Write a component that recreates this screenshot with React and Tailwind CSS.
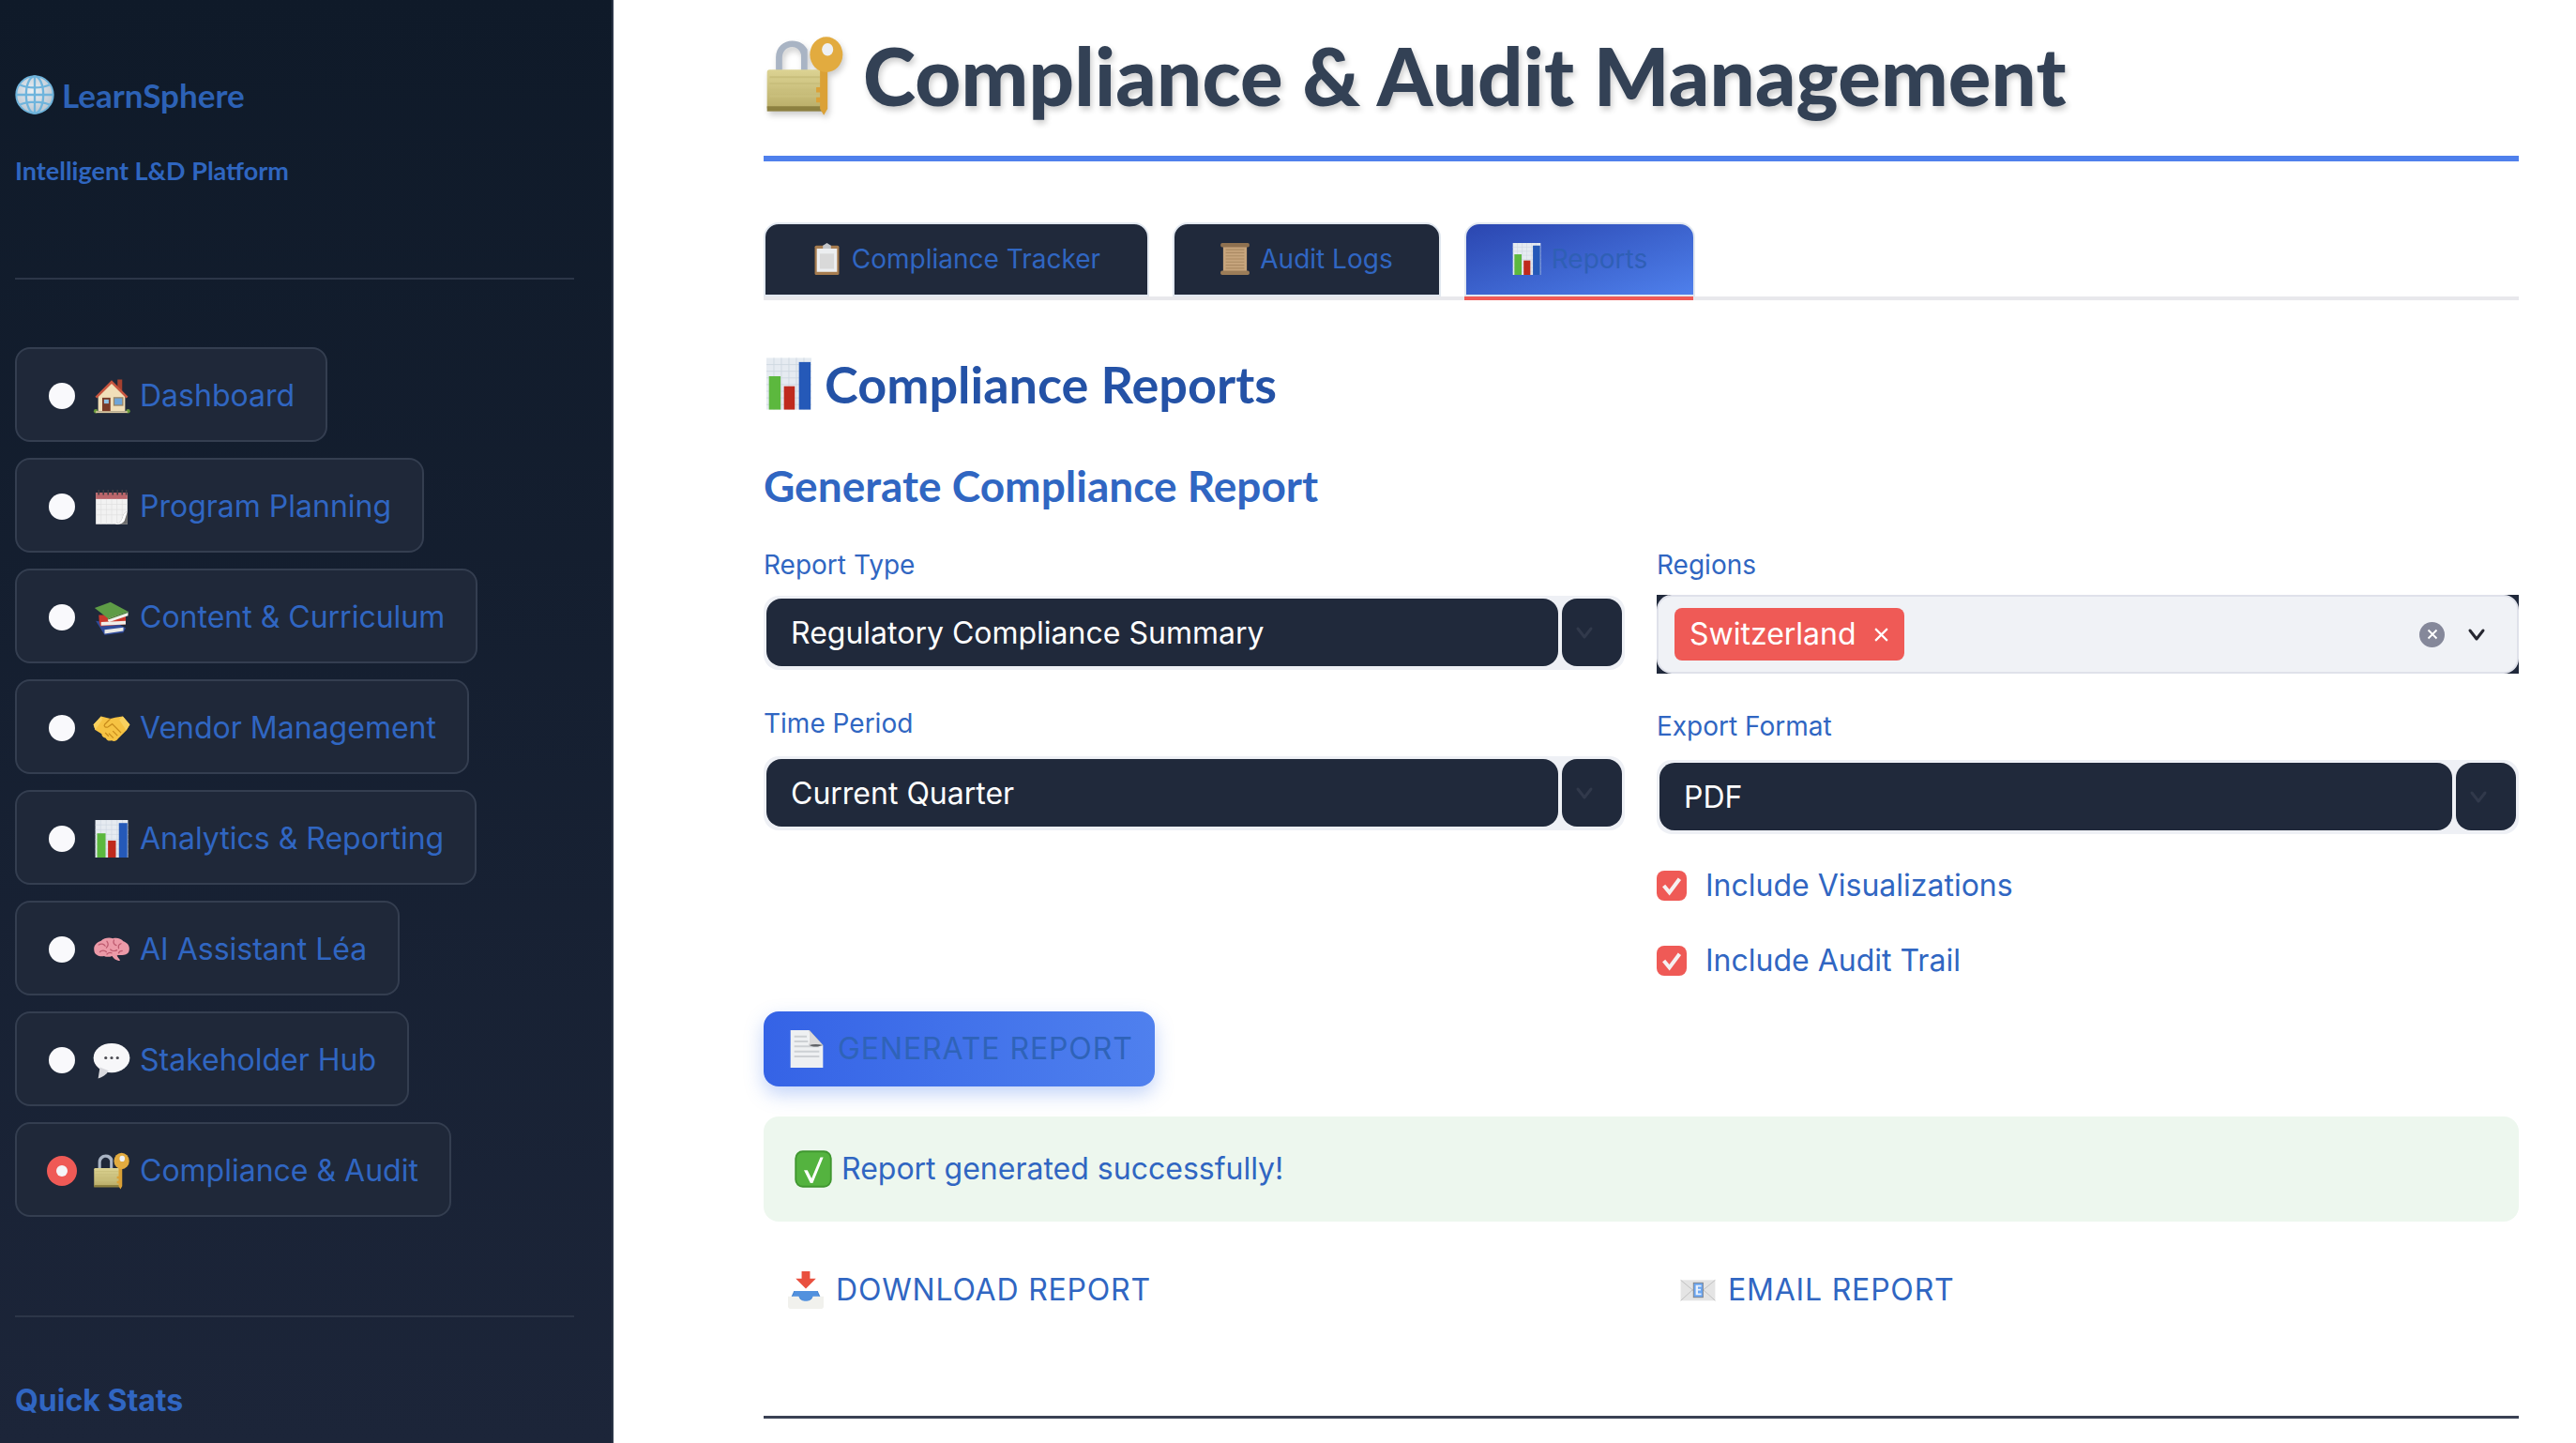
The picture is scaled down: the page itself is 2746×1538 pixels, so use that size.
import React from "react";

const GlobeIcon = ({ className }) => (
  <svg viewBox="0 0 64 64" className={className}>
    <defs>
      <radialGradient id="globeFill" cx="45%" cy="40%" r="60%">
        <stop offset="0%" stopColor="#eef1f4" />
        <stop offset="100%" stopColor="#b9c6d2" />
      </radialGradient>
    </defs>
    <circle cx="32" cy="32" r="30" fill="url(#globeFill)" stroke="#6fb4dc" strokeWidth="3" />
    <g fill="none" stroke="#6fb4dc" strokeWidth="3.5">
      <ellipse cx="32" cy="32" rx="14" ry="30" />
      <path d="M32 2v60M3 32h58M8 16c14 6 34 6 48 0M8 48c14-6 34-6 48 0" />
    </g>
  </svg>
);

const HouseIcon = ({ className }) => (
  <svg viewBox="0 0 64 64" className={className}>
    <path d="M42 4h8v22l-8-7z" fill="#a5402f" />
    <path d="M9 58V30L32 8l23 22v28z" fill="#f1dfb9" />
    <path d="M4 33 32 5l28 28-3 3L32 11 7 36z" fill="#c8553f" />
    <rect x="16" y="35" width="14" height="25" fill="#7a3b27" />
    <rect x="19" y="38" width="8" height="7" fill="#8fc1e4" />
    <rect x="36" y="35" width="15" height="13" fill="#6fa5d8" stroke="#9a8462" strokeWidth="2" />
    <circle cx="5" cy="58" r="3.5" fill="#6a9a3a" />
    <circle cx="60" cy="58" r="3.5" fill="#6a9a3a" />
    <rect x="5" y="58" width="54" height="3" fill="#d9c9a3" />
  </svg>
);

const CalendarIcon = ({ className }) => (
  <svg viewBox="0 0 64 64" className={className}>
    <rect x="5" y="8" width="54" height="54" fill="#f2f2f2" />
    <rect x="5" y="8" width="54" height="11" fill="#b9656a" />
    <path d="M14 19v43M23 19v43M32 19v43M41 19v43M50 19v43M5 28h54M5 37h54M5 46h54" stroke="#dedede" strokeWidth="1" />
    <path d="M59 40v22H36c10-2 13-6 15-13 1-5 4-8 8-9z" fill="#6b6b6b" />
    <path d="M59 40c-4 1-7 4-8 9-2 7-5 11-15 13 8 1 15-1 18-6z" fill="#fff" />
    <path d="M10 3v9M18 3v9M26 3v9M34 3v9M42 3v9M50 3v9M57 3v9" stroke="#3c3c44" strokeWidth="2.5" />
  </svg>
);

const BooksIcon = ({ className }) => (
  <svg viewBox="0 0 64 64" className={className}>
    <path d="M5 38 44 44l12 6-4 8-32 4z" fill="#2f4a9a" />
    <path d="M20 53l32-4v6l-32 5z" fill="#e9e9e6" />
    <path d="M10 28h46v16l-43 3-2-6z" fill="#c9382c" />
    <path d="M14 40l42-2v6l-42 2z" fill="#efeeea" />
    <path d="M3 16 30 6l30 16-34 12z" fill="#5e9c46" />
    <path d="M26 34l34-12v7l-32 11c-3-1-3-4-2-6z" fill="#f1f1ec" />
    <path d="M26 34l34-12v2L26 36z" fill="#3f7c31" />
  </svg>
);

const HandshakeIcon = ({ className }) => (
  <svg viewBox="0 9 64 48" className={className}>
    <path d="M1 27 14 13l16 4 8-2 13-2 12 14-6 10-14 14c-3 5-8 5-11 3-5 2-9-1-10-4-5-1-7-4-7-7L4 36z" fill="#f6c343" />
    <path d="M30 17 20 27c-2 3 2 6 6 4l7-5 15 15M27 47l-6-6M35 50l-8-8M42 46l-8-8" fill="none" stroke="#c98d1d" strokeWidth="2" />
    <path d="M14 13 1 27l3 9 12-17zM51 13l12 14-6 10-12-18z" fill="#f9d15f" />
  </svg>
);

const ChartIcon = ({ className }) => (
  <svg viewBox="5 1 54 62" className={className}>
    <rect x="5" y="1" width="54" height="62" fill="#e6ebf1" />
    <path d="M5 9h54M5 17h54M5 25h54M5 33h54M5 41h54M5 49h54M5 57h54M14 1v62M23 1v62M32 1v62M41 1v62M50 1v62" stroke="#cfd7e1" strokeWidth="1" />
    <rect x="8" y="23" width="14" height="40" fill="#5cb83e" />
    <rect x="26" y="35" width="13" height="28" fill="#bf2a1d" />
    <rect x="44" y="6" width="14" height="57" fill="#2559b8" />
  </svg>
);

const BrainIcon = ({ className }) => (
  <svg viewBox="0 0 64 44" className={className}>
    <path d="M2 22C1 13 9 9 14 7c5-5 14-6 20-4 7-2 14 0 18 5 6 2 11 7 10 14 0 6-5 9-9 9-4 1-9 0-12 1 1 4 6 7 5 9-6 0-11-4-13-8-5 2-10 2-14 0-3 1-8 1-11-1-4-2-6-5-6-10z" fill="#ec9aa8" />
    <path d="M10 14c4-3 9-1 11 2M24 8c3 4 2 8-1 11M36 6c-2 4 0 8 4 9M48 12c-3 1-5 4-4 8M12 26c3-3 8-3 11 0M30 22c3 3 8 3 11 1M50 24c-3 0-5 1-6 4M24 30c2-2 5-3 8-2" fill="none" stroke="#bd5a6f" strokeWidth="2" strokeLinecap="round" />
  </svg>
);

const BubbleIcon = ({ className }) => (
  <svg viewBox="0 0 64 64" className={className}>
    <ellipse cx="32" cy="28" rx="31" ry="25" fill="#f7f7f9" />
    <path d="M12 44 9 63c7-2 14-6 18-13z" fill="#d9d9de" />
    <g fill="#4a4a52">
      <circle cx="22" cy="28" r="2.5" />
      <circle cx="32" cy="28" r="2.5" />
      <circle cx="42" cy="28" r="2.5" />
    </g>
  </svg>
);

const LockKeyIcon = ({ className }) => (
  <svg viewBox="0 0 64 64" className={className}>
    <defs>
      <linearGradient id="lockBody" x1="0" y1="0" x2="0" y2="1">
        <stop offset="0%" stopColor="#dcd393" />
        <stop offset="100%" stopColor="#b9ad68" />
      </linearGradient>
    </defs>
    <path d="M9 30V17C9 9 15 4 22 4c6 0 10 3 12 7v19h-5V15c-1-4-4-6-7-6-5 0-8 4-8 9v12z" fill="#a9b4c4" />
    <rect x="2" y="27" width="44" height="32" rx="2" fill="url(#lockBody)" />
    <rect x="2" y="56" width="44" height="4" fill="#8c8040" />
    <path d="M4 33h40M4 38h40M4 43h40M4 48h40" stroke="#c9bf7c" strokeWidth="1.5" />
    <path d="M44 25h6v33l-3 5-3-5v-5h-3v-4h3v-4h-3v-4h3z" fill="#dba136" />
    <ellipse cx="49" cy="15" rx="13" ry="14" fill="#e2ab3f" />
    <ellipse cx="50" cy="11" rx="4.5" ry="5" fill="#eef0f2" />
  </svg>
);

const ClipboardIcon = ({ className }) => (
  <svg viewBox="8 1 48 63" className={className}>
    <rect x="8" y="6" width="48" height="58" rx="3" fill="#a67c4f" />
    <rect x="12" y="12" width="40" height="46" fill="#eceef0" />
    <rect x="18" y="22" width="28" height="30" fill="#d9d9d9" />
    <path d="M24 12V6l8-5 8 5v6z" fill="#c3c6ca" />
  </svg>
);

const ScrollIcon = ({ className }) => (
  <svg viewBox="4 1 56 62" className={className}>
    <rect x="9" y="6" width="46" height="52" fill="#c6a47c" />
    <path d="M14 14h36M14 20h36M14 26h36M14 32h36M14 38h36M14 44h36M14 50h36" stroke="#ab8a63" strokeWidth="2" />
    <rect x="4" y="1" width="56" height="8" rx="3" fill="#8f7150" />
    <rect x="4" y="55" width="56" height="8" rx="3" fill="#9b7c58" />
  </svg>
);

const PageIcon = ({ className }) => (
  <svg viewBox="6 2 52 60" className={className}>
    <path d="M6 2h30l22 24v36H6z" fill="#eef0f2" />
    <path d="M12 12h20M12 20h22M12 28h40M12 36h40M12 44h40" stroke="#cdd0d4" strokeWidth="3" />
    <path d="M36 2c1 12 0 20 0 24 8 4 16 2 22 0z" fill="#5f6266" />
    <path d="M36 2c-2 10-2 18 0 24 6-2 14-2 22 0z" fill="#f8f8f8" opacity="0.8" />
  </svg>
);

const CheckBoxEmoji = ({ className }) => (
  <svg viewBox="0 0 64 64" className={className}>
    <rect x="2" y="2" width="60" height="60" rx="12" fill="#54b33f" stroke="#3f962f" strokeWidth="3" />
    <path d="M16 34h6l7 14L44 12h5L31 56h-4z" fill="#fff" />
  </svg>
);

const InboxIcon = ({ className }) => (
  <svg viewBox="2 1 60 63" className={className}>
    <path d="M12 34h40l10 22H2z" fill="#3f7ecb" />
    <path d="M13 34h38l4 12H41c-2 5-6 7-9 7s-7-2-9-7H9z" fill="#5291de" />
    <path d="M2 43h18c2 6 7 8 12 8s10-2 12-8h18v17c0 2-2 4-4 4H6c-2 0-4-2-4-4z" fill="#f1f1ed" />
    <path d="M25 1h14v12h10L32 30 15 13h10z" fill="#e9503f" />
  </svg>
);

const MailIcon = ({ className }) => (
  <svg viewBox="0 0 64 40" className={className}>
    <rect x="1" y="2" width="62" height="37" fill="#e4e4e4" />
    <path d="M1 2l24 20M63 2 39 22M1 39l22-20M63 39 41 19" stroke="#bdbdbd" strokeWidth="1.5" />
    <rect x="24" y="7" width="17" height="26" fill="#6aa6f2" stroke="#7b7f86" strokeWidth="1.5" />
    <path d="M28 11h10v3h-6v4h5v3h-5v5h6v3H28z" fill="#e8f0fb" />
  </svg>
);

const Chevron = ({ className }) => (
  <svg viewBox="0 0 20 20" fill="none" className={className}>
    <path d="M3 6l7 9 7-9" stroke="currentColor" strokeWidth="3" strokeLinecap="round" strokeLinejoin="round" />
  </svg>
);

const navItems = [
  { label: "Dashboard", Icon: HouseIcon },
  { label: "Program Planning", Icon: CalendarIcon },
  { label: "Content & Curriculum", Icon: BooksIcon },
  { label: "Vendor Management", Icon: HandshakeIcon },
  { label: "Analytics & Reporting", Icon: ChartIcon },
  { label: "AI Assistant Léa", Icon: BrainIcon },
  { label: "Stakeholder Hub", Icon: BubbleIcon },
  { label: "Compliance & Audit", Icon: LockKeyIcon, active: true },
];

const tabs = [
  { label: "Compliance Tracker", Icon: ClipboardIcon, cls: "w-[411px]" },
  { label: "Audit Logs", Icon: ScrollIcon, cls: "w-[286px]" },
  { label: "Reports", Icon: ChartIcon, cls: "w-[246px]", active: true },
];

const heading = "font-['Lato',sans-serif]";

const Label = ({ children }) => (
  <div className="h-10 text-[28px] leading-10 text-[#3066c2]">{children}</div>
);

const Select = ({ value }) => (
  <div className="flex h-[79px] gap-1 rounded-2xl bg-[#eef0f5] p-[3px] pb-1">
    <div className="flex flex-1 items-center rounded-2xl bg-[#20293b] pl-[26px] pt-0.5 text-[32px] text-white">{value}</div>
    <div className="flex w-[64px] items-center justify-center rounded-2xl bg-[#20293b]">
      <Chevron className="mr-4 h-5 w-5 text-[#31394b]" />
    </div>
  </div>
);

const CheckRow = ({ label }) => (
  <div className="flex h-8 items-center gap-5">
    <div className="flex h-8 w-8 items-center justify-center rounded-lg bg-[#ef5a56]">
      <svg viewBox="0 0 20 20" fill="none" className="h-6 w-6">
        <path d="M3 10l5 6 9-12" stroke="#f6f1f1" strokeWidth="3.4" />
      </svg>
    </div>
    <span className="text-[32px] text-[#3066c2]">{label}</span>
  </div>
);

export default function App() {
  return (
    <div className="flex h-screen overflow-hidden bg-white font-['Inter',sans-serif]">
      <aside className="w-[654px] shrink-0 border-r-2 border-[#2a3446] bg-gradient-to-b from-[#0f1a29] to-[#1c2539] pl-4 pr-10">
        <div className={`mt-[77px] flex h-12 items-center gap-2 ${heading}`}>
          <GlobeIcon className="h-[42px] w-[42px]" />
          <span className="text-[35px] font-bold text-[#2d62b6]">LearnSphere</span>
        </div>
        <div className={`mt-[39px] h-9 text-[27px] font-bold leading-9 text-[#2f66c0] ${heading}`}>
          Intelligent L&amp;D Platform
        </div>
        <div className="mt-[96px] h-0.5 bg-[#2c3648]" />
        <nav className="mt-[72px] flex flex-col items-start gap-[17px]">
          {navItems.map(({ label, Icon, active }) => (
            <div key={label} className="flex h-[101px] items-center rounded-2xl border-2 border-[#343e50] bg-[#1f2839] pl-8 pr-[33px] pt-0.5">
              {active ? (
                <span className="flex h-8 w-8 items-center justify-center rounded-full bg-[#ef5a56]">
                  <span className="h-3 w-3 rounded-full bg-[#f5f5f8]" />
                </span>
              ) : (
                <span className="mx-0.5 h-7 w-7 rounded-full bg-[#f9f9fc]" />
              )}
              <span className="ml-[17px] flex w-10 justify-center">
                <Icon className="h-10 w-10" />
              </span>
              <span className="ml-[10px] text-[32px] leading-none text-[#3066c2]">{label}</span>
            </div>
          ))}
        </nav>
        <div className="mt-[105px] h-0.5 bg-[#2c3648]" />
        <div className="mt-[69px] text-[32px] font-bold leading-10 text-[#3066c2]">Quick Stats</div>
      </aside>

      <main className="flex-1 pl-40 pr-[61px]">
        <div className="flex h-[166px] items-center gap-[18px] pb-1">
          <LockKeyIcon className="h-[86px] w-[88px] drop-shadow-[2px_4px_3px_rgba(0,0,0,0.2)]" />
          <h1 className={`text-[85px] font-black tracking-[0.2px] text-[#334155] [text-shadow:2px_4px_6px_rgba(0,0,0,0.2)] ${heading}`}>
            Compliance &amp; Audit Management
          </h1>
        </div>
        <div className="h-1.5 bg-[#4f80ec]" />

        <div className="mt-[65px] flex h-[83px] gap-[25px] border-b-4 border-[#e8e8ec]">
          {tabs.map(({ label, Icon, cls, active }) => (
            <div key={label} className={`relative flex h-[79px] items-center justify-center gap-[11px] rounded-t-2xl border-2 border-[#e2e8f0] pb-0.5 text-[28px] ${cls} ${active ? "bg-gradient-to-br from-[#2b46b0] to-[#4f80ec] text-[#2f5fb5]" : "bg-[#20293b] text-[#3066c2]"}`}>
              <Icon className="h-[34px] w-[31px]" />
              <span>{label}</span>
              {active && <span className="absolute -bottom-[6px] -left-0.5 h-1 w-[244px] bg-[#ef5a56]" />}
            </div>
          ))}
        </div>

        <div className={`mt-[59px] flex h-[60px] items-center gap-[14px] text-[#2452a6] ${heading}`}>
          <ChartIcon className="ml-[3px] h-[56px] w-[48px]" />
          <h2 className="text-[54px] font-bold">Compliance Reports</h2>
        </div>
        <h3 className={`mt-[49px] h-[60px] text-[46px] font-bold leading-[60px] text-[#3066c2] ${heading}`}>
          Generate Compliance Report
        </h3>

        <div className="mt-[34px] grid grid-cols-[918px_1fr] gap-x-[34px]">
          <div>
            <Label>Report Type</Label>
            <div className="mt-[13px]"><Select value="Regulatory Compliance Summary" /></div>
            <div className="mt-[37px]"><Label>Time Period</Label></div>
            <div className="mt-[15px]"><Select value="Current Quarter" /></div>
          </div>
          <div>
            <Label>Regions</Label>
            <div className="mt-3 bg-[#20293b]">
              <div className="flex h-[84px] items-center rounded-2xl border-2 border-[#dfe1ea] bg-[#f0f2f6] pl-[17px] pr-[33px]">
                <div className="flex h-14 items-center gap-[18px] rounded-lg bg-[#ef5a56] pl-4 pr-4 text-[32px] text-white">
                  Switzerland
                  <svg viewBox="0 0 16 16" className="h-[17px] w-[17px]" fill="none">
                    <path d="M2 2l12 12M14 2 2 14" stroke="#fff" strokeWidth="2" />
                  </svg>
                </div>
                <div className="ml-auto flex h-[27px] w-[27px] items-center justify-center rounded-full bg-[#85889a]">
                  <svg viewBox="0 0 16 16" className="h-3 w-3" fill="none">
                    <path d="M2 2l12 12M14 2 2 14" stroke="#fff" strokeWidth="2.4" />
                  </svg>
                </div>
                <Chevron className="ml-6 h-5 w-5 text-[#262730]" />
              </div>
            </div>
            <div className="mt-9"><Label>Export Format</Label></div>
            <div className="mt-4"><Select value="PDF" /></div>
            <div className="mt-[39px]"><CheckRow label="Include Visualizations" /></div>
            <div className="mt-12"><CheckRow label="Include Audit Trail" /></div>
          </div>
        </div>

        <div className="mt-[38px] flex h-20 w-[417px] items-center gap-[15px] rounded-2xl bg-gradient-to-r from-[#3563e6] to-[#4f80ee] pl-7 shadow-[0_8px_20px_rgba(79,128,236,0.35)]">
          <PageIcon className="h-10 w-9" />
          <span className="text-[32px] tracking-[0.9px] text-[#2f63b8]">GENERATE REPORT</span>
        </div>

        <div className="mt-8 flex h-28 items-center gap-[10px] rounded-2xl bg-[#edf7ee] pl-[33px]">
          <CheckBoxEmoji className="h-10 w-10" />
          <span className="text-[32px] text-[#3066c2]">Report generated successfully!</span>
        </div>

        <div className="mt-[49px] grid h-10 grid-cols-[918px_1fr] gap-x-[34px] text-[32px] tracking-[0.8px] text-[#3066c2]">
          <div className="flex items-center gap-[13px] pl-[26px]">
            <InboxIcon className="h-10 w-[38px]" />
            DOWNLOAD REPORT
          </div>
          <div className="flex items-center gap-[13px] pl-[25px]">
            <MailIcon className="h-[26px] w-[38px]" />
            EMAIL REPORT
          </div>
        </div>

        <div className="mt-[118px] h-[3px] bg-[#3a4154]" />
      </main>
    </div>
  );
}
